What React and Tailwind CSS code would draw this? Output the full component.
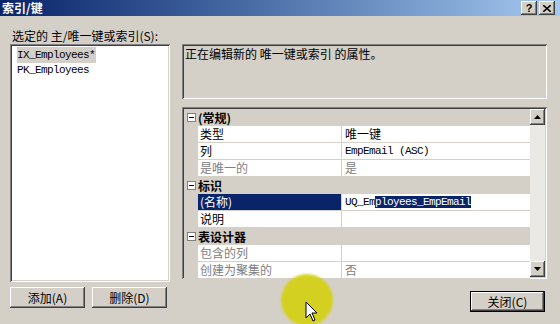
import React from 'react';

const cjk = "font-['SimSun','Noto_Sans_CJK_SC',sans-serif]";
const mono = "font-['Liberation_Mono','Noto_Sans_CJK_SC',monospace] text-[11px] tracking-[-0.6px]";
const sunken =
  'shadow-[inset_1px_1px_0_#808080,inset_-1px_-1px_0_#ffffff,inset_2px_2px_0_#404040,inset_-2px_-2px_0_#d4d0c8]';
const raised =
  'shadow-[inset_-1px_-1px_0_#404040,inset_1px_1px_0_#ffffff,inset_-2px_-2px_0_#808080,inset_2px_2px_0_#d4d0c8]';

function Minus() {
  return (
    <svg width="9" height="9" viewBox="0 0 9 9" className="block">
      <rect x="0.5" y="0.5" width="8" height="8" fill="#fff" stroke="#808080" />
      <line x1="2" y1="4.5" x2="7" y2="4.5" stroke="#000" />
    </svg>
  );
}

function Category({ label }) {
  return (
    <div className="flex h-[17px] items-center bg-[#d4d0c8]">
      <div className="flex w-[14px] justify-center pl-[1px]">
        <Minus />
      </div>
      <span className="pl-[0px] text-[12px] font-bold leading-[17px] text-black">{label}</span>
    </div>
  );
}

// 属性行：名称 + 值
function PropRow({ name, value, dim, selected, ascii }) {
  return (
    <div className="flex h-[17px]">
      <div className="w-[14px] bg-[#d4d0c8]" />
      <div
        className={`w-[144px] border-b border-r border-[#d4d0c8] pl-[2px] text-[12px] leading-[16px] ${
          selected ? 'bg-[#0a246a] text-white' : 'bg-white'
        } ${dim ? 'text-[#808080]' : ''}`}
      >
        {name}
      </div>
      <div
        className={`flex-1 border-b border-[#d4d0c8] bg-white pl-[3px] leading-[16px] ${
          ascii ? mono : 'text-[12px]'
        } ${dim ? 'text-[#808080]' : 'text-black'}`}
      >
        {value}
      </div>
    </div>
  );
}

function ScrollArrow({ up }) {
  return (
    <div className={`flex h-[16px] w-[15px] items-center justify-center bg-[#d4d0c8] ${raised}`}>
      <svg width="7" height="4" viewBox="0 0 7 4">
        {up ? <polygon points="3.5,0 7,4 0,4" fill="#000" /> : <polygon points="0,0 7,0 3.5,4" fill="#000" />}
      </svg>
    </div>
  );
}

function Btn({ children, def, className = '' }) {
  return (
    <div
      className={`flex h-[21px] w-[75px] items-center justify-center bg-[#d4d0c8] text-[12px] text-black ${
        def ? 'border border-black' : ''
      } ${raised} ${className}`}
    >
      {children}
    </div>
  );
}

export default function App() {
  return (
    <div className={`relative h-[324px] w-[560px] overflow-hidden bg-[#d4d0c8] ${cjk}`}>
      {/* 标题栏 */}
      <div className="flex h-[16px] items-center bg-gradient-to-r from-[#0a246a] to-[#a6caf0] pl-[2px] pr-[5px]">
        <span className="text-[12px] font-bold leading-[16px] text-white">索引/键</span>
        <div className="ml-auto flex gap-[2px]">
          <div className={`flex h-[14px] w-[16px] items-center justify-center bg-[#d4d0c8] text-[11px] font-bold leading-none ${raised} font-['Liberation_Sans',sans-serif]`}>
            ?
          </div>
          <div className={`flex h-[14px] w-[16px] items-center justify-center bg-[#d4d0c8] ${raised}`}>
            <svg width="8" height="7" viewBox="0 0 8 7">
              <path d="M0 0 L8 7 M8 0 L0 7" stroke="#000" strokeWidth="1.6" />
            </svg>
          </div>
        </div>
      </div>

      <div className="mt-[12px] h-[16px] pl-[12px] text-[12px] leading-[16px] text-black">
        选定的 主/唯一键或索引(S):
      </div>

      <div className="flex gap-[12px] pl-[10px]">
        {/* 左侧列表 */}
        <div className="flex w-[160px] flex-col">
          <div className={`h-[238px] bg-white p-[3px] ${sunken}`}>
            <div className={`ml-[4px] w-fit bg-[#d4d0c8] pr-[1px] leading-[16px] text-black ${mono}`}>IX_Employees*</div>
            <div className={`ml-[4px] leading-[15px] text-black ${mono}`}>PK_Employees</div>
          </div>
          <div className="mt-[5px] flex gap-[7px]">
            <Btn>添加(A)</Btn>
            <Btn>删除(D)</Btn>
          </div>
        </div>

        {/* 右侧 */}
        <div className="flex w-[365px] flex-col">
          <div className={`h-[55px] px-[3px] pt-[3px] text-[12px] leading-[14px] text-black ${sunken}`}>
            正在编辑新的 唯一键或索引 的属性。
          </div>
          <div className={`mt-[8px] flex h-[172px] p-[2px] ${sunken}`}>
            <div className="flex flex-1 flex-col">
              <Category label="(常规)" />
              <PropRow name="类型" value="唯一键" />
              <PropRow name="列" value="EmpEmail (ASC)" ascii />
              <PropRow name="是唯一的" value="是" dim />
              <Category label="标识" />
              <PropRow
                name="(名称)"
                selected
                ascii
                value={
                  <span>
                    UQ_Em<span className="bg-[#0a246a] text-white">ployees_EmpEmail</span>
                  </span>
                }
              />
              <PropRow name="说明" value="" />
              <Category label="表设计器" />
              <PropRow name="包含的列" value="" dim />
              <PropRow name="创建为聚集的" value="否" dim />
            </div>
            <div className="flex w-[15px] flex-col bg-[#ebe9e5]">
              <ScrollArrow up />
              <div className="flex-1" />
              <ScrollArrow />
            </div>
          </div>
          <div className="mt-[12px] flex justify-end pr-[2px]">
            <Btn def>关闭(C)</Btn>
          </div>
        </div>
      </div>

      {/* 鼠标高亮 */}
      <div className="pointer-events-none absolute left-[281px] top-[274px] h-[52px] w-[52px] rounded-full bg-[#d5d11a] opacity-95 blur-[1px]" />
      <svg className="pointer-events-none absolute left-[305px] top-[301px]" width="13" height="21" viewBox="0 0 13 21">
        <path d="M1 1 L1 17 L5 13 L8 20 L10 19 L7 12 L12 12 Z" fill="#fff" stroke="#000" strokeWidth="1" strokeLinejoin="round" />
      </svg>
    </div>
  );
}
